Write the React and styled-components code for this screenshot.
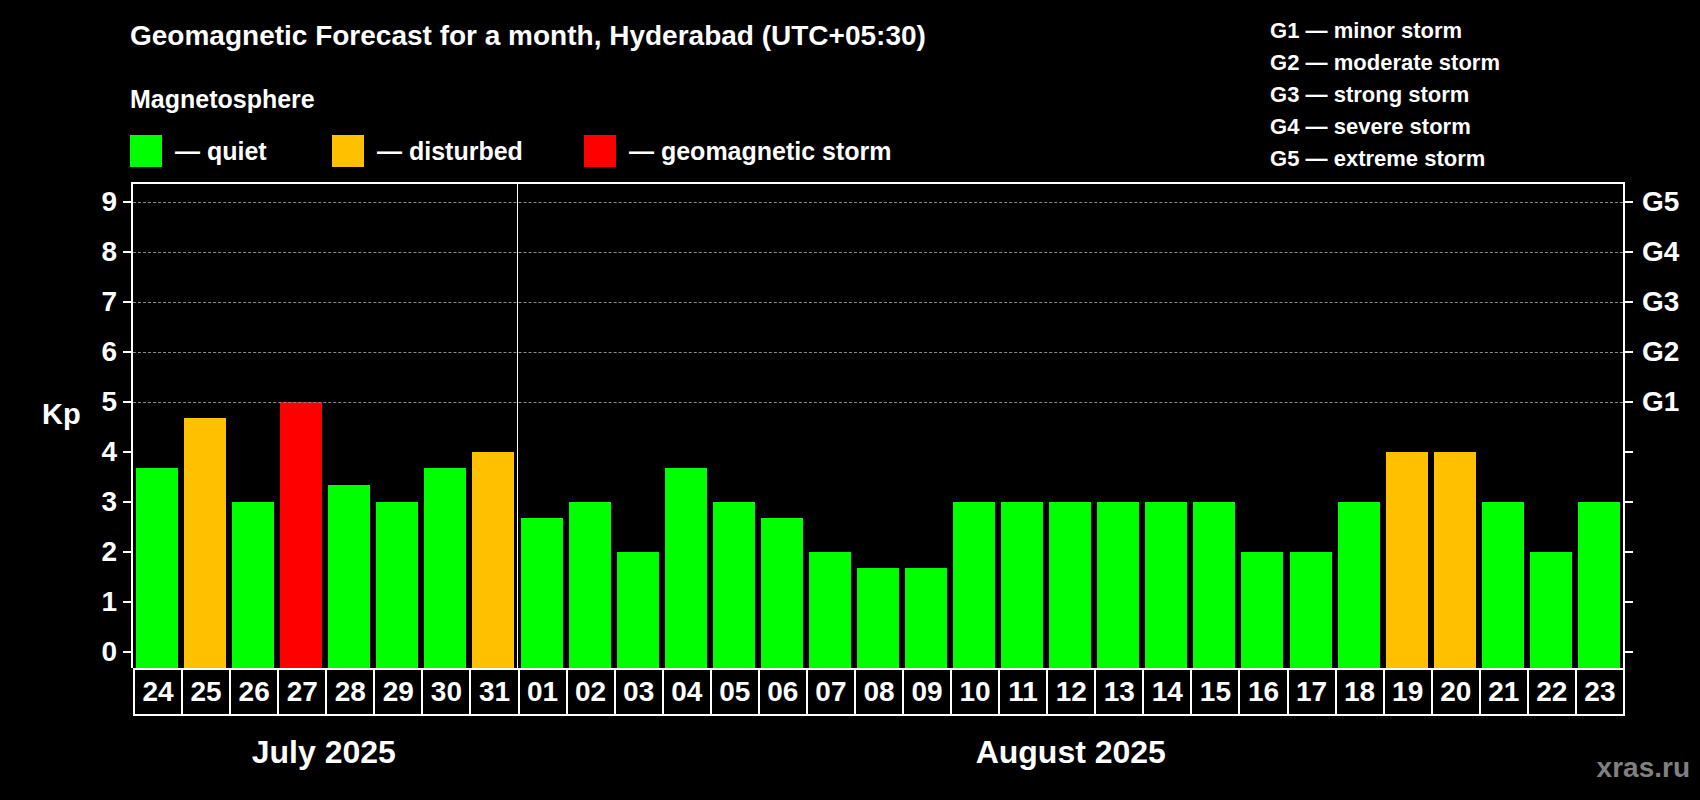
import styled, { createGlobalStyle } from "styled-components";

const GlobalStyle = createGlobalStyle`
  html, body {
    margin: 0;
    background: #000;
    font-family: "Liberation Sans", Arial, sans-serif;
    font-weight: bold;
    color: #fff;
  }
`;

const july = [3.67, 4.67, 3, 5, 3.33, 3, 3.67, 4];
const august = [2.67, 3, 2, 3.67, 3, 2.67, 2, 1.67, 1.67, 3, 3, 3, 3, 3, 3, 2, 2, 3, 4, 4, 3, 2, 3];
const days = [
  ...july.map((v, i) => ({ day: String(24 + i), kp: v })),
  ...august.map((v, i) => ({ day: String(i + 1).padStart(2, "0"), kp: v })),
];

const GREEN = "#00ff00";
const ORANGE = "#ffc000";
const RED = "#ff0000";
const colorFor = (kp) => (kp >= 5 ? RED : kp >= 4 ? ORANGE : GREEN);

// pixel position of a Kp value, measured from the top of the plot frame
const yOf = (kp) => 469.7 - 50 * kp;

const Page = styled.div`
  position: relative;
  width: 1700px;
  height: 800px;
  overflow: hidden;
`;

const Header = styled.div`
  display: flex;
  justify-content: space-between;
  height: 182px;
  padding-left: 130px;
  padding-right: 200px;
  box-sizing: border-box;
`;

const LeftBlock = styled.div`
  display: flex;
  flex-direction: column;
`;

const Title = styled.div`
  font-size: 28px;
  line-height: 32px;
  margin-top: 20px;
`;

const Subtitle = styled.div`
  font-size: 25px;
  line-height: 30px;
  margin-top: 32px;
`;

const Legend = styled.div`
  display: flex;
  margin-top: 21px;
`;

const LegendItem = styled.div`
  display: flex;
  align-items: center;
  width: ${(p) => p.$w}px;
  font-size: 25px;
  height: 32px;
`;

const Swatch = styled.span`
  width: 32px;
  height: 32px;
  background: ${(p) => p.$color};
  margin-right: 13px;
`;

const StormList = styled.div`
  display: flex;
  flex-direction: column;
  padding-top: 15px;
  margin-left: 98px;
`;

const StormLine = styled.div`
  font-size: 22px;
  line-height: 32px;
  white-space: nowrap;
`;

const ChartRow = styled.div`
  display: flex;
`;

const Axis = styled.div`
  position: relative;
  width: ${(p) => p.$w}px;
  height: 486px;
`;

const AxisLabel = styled.span`
  position: absolute;
  font-size: 28px;
  line-height: 28px;
  transform: translateY(-50%);
  ${(p) => (p.$side === "left" ? "right: 14px;" : "left: 17px;")}
`;

const Tick = styled.span`
  position: absolute;
  width: 8px;
  height: 2px;
  background: #fff;
  transform: translateY(-50%);
  ${(p) => (p.$side === "left" ? "right: 0;" : "left: 0;")}
`;

const KpLabel = styled.span`
  position: absolute;
  left: 42px;
  top: 216px;
  font-size: 29px;
`;

const Plot = styled.div`
  position: relative;
  width: 1494px;
  height: 486px;
  box-sizing: border-box;
  border: 2px solid #fff;
  border-bottom: none;
  display: flex;
  align-items: flex-end;
`;

const GridLine = styled.div`
  position: absolute;
  left: 0;
  right: 0;
  border-top: 1px dashed #8a8a8a;
`;

const MonthDivider = styled.div`
  position: absolute;
  top: 0;
  bottom: 0;
  left: ${8 * 48.2 - 2}px;
  width: 1.5px;
  background: #fff;
`;

const Slot = styled.div`
  flex: 1;
  display: flex;
  justify-content: center;
  align-items: flex-end;
  height: 100%;
`;

const Bar = styled.div`
  width: 42px;
  background: ${(p) => p.$color};
`;

const DateRow = styled.div`
  display: flex;
  margin-left: 133px;
  width: 1492px;
  height: 48px;
  border-left: 2px solid #fff;
  border-bottom: 2px solid #fff;
  box-sizing: border-box;
`;

const DateCell = styled.div`
  flex: 1;
  display: flex;
  align-items: center;
  justify-content: center;
  font-size: 28px;
  border-right: 2px solid #fff;
  border-top: 2px solid #fff;
`;

const MonthRow = styled.div`
  display: flex;
  margin-left: 131px;
  width: 1494px;
  margin-top: 18px;
`;

const Month = styled.div`
  flex: ${(p) => p.$n};
  text-align: center;
  font-size: 32px;
`;

const Credit = styled.div`
  position: absolute;
  right: 10px;
  bottom: 16px;
  font-size: 28px;
  color: #808080;
`;

const storms = ["minor", "moderate", "strong", "severe", "extreme"];

export default function App() {
  const levels = [0, 1, 2, 3, 4, 5, 6, 7, 8, 9];
  return (
    <Page>
      <GlobalStyle />
      <Header>
        <LeftBlock>
          <Title>Geomagnetic Forecast for a month, Hyderabad (UTC+05:30)</Title>
          <Subtitle>Magnetosphere</Subtitle>
          <Legend>
            <LegendItem $w={202}><Swatch $color={GREEN} />— quiet</LegendItem>
            <LegendItem $w={252}><Swatch $color={ORANGE} />— disturbed</LegendItem>
            <LegendItem $w={320}><Swatch $color={RED} />— geomagnetic storm</LegendItem>
          </Legend>
        </LeftBlock>
        <StormList>
          {storms.map((s, i) => (
            <StormLine key={s}>G{i + 1} — {s} storm</StormLine>
          ))}
        </StormList>
      </Header>

      <ChartRow>
        <Axis $w={131}>
          <KpLabel>Kp</KpLabel>
          {levels.map((l) => (
            <span key={l}>
              <AxisLabel $side="left" style={{ top: yOf(l) }}>{l}</AxisLabel>
              <Tick $side="left" style={{ top: yOf(l) }} />
            </span>
          ))}
        </Axis>
        <Plot>
          {[5, 6, 7, 8, 9].map((l) => (
            <GridLine key={l} style={{ top: yOf(l) - 2 }} />
          ))}
          <MonthDivider />
          {days.map((d) => (
            <Slot key={d.day + d.kp}>
              <Bar $color={colorFor(d.kp)} style={{ height: 16.3 + 50 * d.kp }} />
            </Slot>
          ))}
        </Plot>
        <Axis $w={75}>
          {levels.map((l) => (
            <span key={l}>
              <Tick $side="right" style={{ top: yOf(l) }} />
              {l >= 5 && (
                <AxisLabel $side="right" style={{ top: yOf(l) }}>G{l - 4}</AxisLabel>
              )}
            </span>
          ))}
        </Axis>
      </ChartRow>

      <DateRow>
        {days.map((d) => (
          <DateCell key={d.day}>{d.day}</DateCell>
        ))}
      </DateRow>
      <MonthRow>
        <Month $n={8}>July 2025</Month>
        <Month $n={23}>August 2025</Month>
      </MonthRow>
      <Credit>xras.ru</Credit>
    </Page>
  );
}
